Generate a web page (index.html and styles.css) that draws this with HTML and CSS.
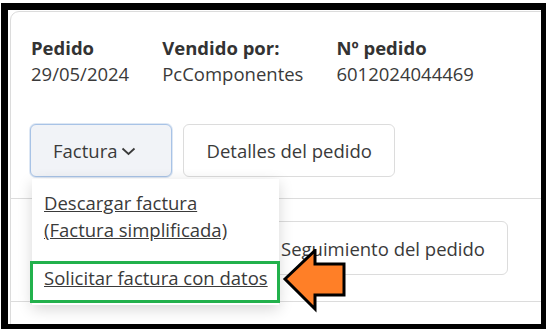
FILE: index.html
```html
<!DOCTYPE html>
<html lang="es">
<head>
    <meta charset="UTF-8">
    <meta name="viewport" content="width=device-width, initial-scale=1.0">
    <title>Mis pedidos - Factura</title>
    <link rel="stylesheet" href="styles.css">
</head>
<body>
    <div class="frame">
        <div class="order-card">
            <!-- Order summary -->
            <div class="order-info">
                <div class="info-col">
                    <span class="info-label">Pedido</span>
                    <span class="info-value">29/05/2024</span>
                </div>
                <div class="info-col">
                    <span class="info-label">Vendido por:</span>
                    <span class="info-value">PcComponentes</span>
                </div>
                <div class="info-col">
                    <span class="info-label">Nº pedido</span>
                    <span class="info-value">6012024044469</span>
                </div>
            </div>

            <!-- Actions -->
            <div class="order-actions">
                <div class="invoice-menu">
                    <button type="button" class="btn btn-open">
                        Factura
                        <svg class="chevron" width="15" height="9" viewBox="0 0 15 9">
                            <polyline points="1.5,1.5 7.5,7 13.5,1.5" fill="none" stroke="#3a3a3a" stroke-width="1.8"/>
                        </svg>
                    </button>
                    <div class="invoice-dropdown">
                        <a href="#" class="dropdown-item">Descargar factura<br>(Factura simplificada)</a>
                        <a href="#" class="dropdown-item">Solicitar factura con datos</a>
                    </div>
                </div>
                <button type="button" class="btn">Detalles del pedido</button>
            </div>

            <div class="order-tracking">
                <button type="button" class="btn btn-tracking">Seguimiento del pedido</button>
            </div>
        </div>

        <!-- Annotation -->
        <div class="highlight-box"></div>
        <svg class="highlight-arrow" width="70" height="70" viewBox="0 0 70 70">
            <polygon points="3,30 33,1.5 33,15 62,15 62,46 33,46 33,60" fill="#ff7f27" stroke="#000" stroke-width="3" stroke-linejoin="miter"/>
        </svg>
    </div>
</body>
</html>
```

FILE: styles.css
```css
body {
    margin: 0;
    background-color: #fff;
    font-family: "Open Sans", Arial, sans-serif;
    color: #3a3a3a;
}

.frame {
    position: relative;
    margin: 3px 3px 4px 1px;
    height: 314px;
    border-style: solid;
    border-color: #000;
    border-width: 7px 5px 5px 7px;
    overflow: hidden;
}

.order-card {
    margin: 1px 0 0 2px;
    width: 560px;
    height: 360px;
    padding: 23px 0 0 20px;
    border: 1px solid #dcdcdc;
    border-radius: 9px 0 0 0;
}

.order-info {
    display: flex;
    gap: 33px;
    font-size: 18.5px;
    line-height: 26px;
}

.info-col {
    display: flex;
    flex-direction: column;
}

.info-label {
    font-weight: 700;
    color: #333;
}

.order-actions {
    display: flex;
    gap: 11px;
    margin-top: 37px;
}

.btn {
    display: flex;
    align-items: center;
    height: 53px;
    padding: 0 22px;
    border: 1px solid #dcdcdc;
    border-radius: 6px;
    background-color: #fff;
    font-family: inherit;
    font-size: 18.5px;
    color: #3a3a3a;
}

.btn-open {
    margin-left: -1px;
    padding-right: 35px;
    background-color: #f1f3f7;
    border-color: #a8c3e6;
    box-shadow: 0 0 0 1px #dde7f4;
}

.chevron {
    margin-left: 4px;
    margin-top: 2px;
}

.invoice-menu {
    position: relative;
}

.invoice-dropdown {
    position: absolute;
    z-index: 2;
    top: 55px;
    left: 1px;
    width: 247px;
    padding: 10px 0 14px 12px;
    box-sizing: border-box;
    background-color: #fff;
    box-shadow: 0 4px 14px rgba(0, 0, 0, 0.16);
}

.dropdown-item {
    display: block;
    font-size: 18.5px;
    line-height: 27px;
    color: #3a3a3a;
    white-space: nowrap;
}

.dropdown-item + .dropdown-item {
    margin-top: 21px;
}

.order-tracking {
    margin-top: 21px;
    margin-left: -20px;
    padding: 22px 0 26px 247px;
    border-top: 1px solid #dcdcdc;
    border-bottom: 1px solid #dcdcdc;
}

.btn-tracking {
    height: 54px;
}

.highlight-box {
    position: absolute;
    z-index: 3;
    left: 22px;
    top: 251px;
    width: 244px;
    height: 36px;
    border: 3px solid #22b14c;
}

.highlight-arrow {
    position: absolute;
    z-index: 3;
    left: 274px;
    top: 239px;
}
```
